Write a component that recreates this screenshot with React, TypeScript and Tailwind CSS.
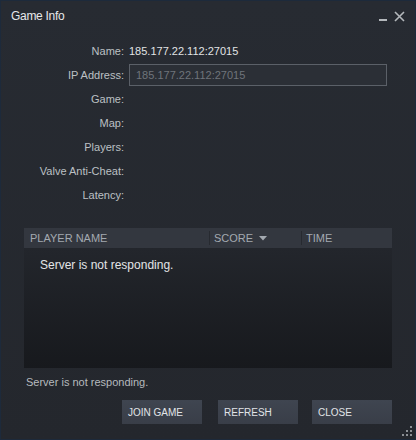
import React from "react";

const labels = ["Game:", "Map:", "Players:", "Valve Anti-Cheat:", "Latency:"];

function Row({ label, children }: { label: string; children?: React.ReactNode }) {
  return (
    <div className="flex h-[24px] items-center">
      <div className="w-[123px] shrink-0 text-right text-[11px] text-[#bcc0c4]">{label}</div>
      <div className="ml-[5px] flex items-center">{children}</div>
    </div>
  );
}

export default function App() {
  return (
    <div
      className="relative flex h-[440px] w-[416px] flex-col border border-[#1d2a3b] bg-gradient-to-b from-[#272b32] to-[#24272d] text-[#dfe1e3]"
      style={{ fontFamily: '"Liberation Sans", Arial, sans-serif' }}
    >
      {/* title bar */}
      <div className="flex h-[30px] shrink-0 items-center pl-[10px] pr-[10px]">
        <div className="text-[12px] tracking-[-0.3px] text-[#e6e8ea]">Game Info</div>
        <div className="ml-auto flex items-center gap-[6px]">
          <svg width="9" height="12" viewBox="0 0 9 12">
            <rect x="0" y="9" width="8" height="2" fill="#b4b8bc" />
          </svg>
          <svg width="11" height="11" viewBox="0 0 11 11">
            <path d="M1 1 L10 10 M10 1 L1 10" stroke="#b4b8bc" strokeWidth="1.6" />
          </svg>
        </div>
      </div>

      {/* info rows */}
      <div className="pt-[8px]">
        <Row label="Name:">
          <span className="text-[11px] text-[#e1e3e5]">185.177.22.112:27015</span>
        </Row>
        <Row label="IP Address:">
          <div className="flex h-[22px] w-[258px] items-center border border-[#5b6068] bg-[#2b2f36] pl-[6px] text-[11px] text-[#6f747b]">
            185.177.22.112:27015
          </div>
        </Row>
        {labels.map((l) => (
          <Row key={l} label={l} />
        ))}
      </div>

      {/* table */}
      <div className="mx-[23px] mt-[21px] flex h-[140px] flex-col">
        <div className="flex h-[20px] shrink-0 items-center bg-[#33373f] text-[11px] text-[#a3a9b0]">
          <div className="w-[185px] pl-[6px]">PLAYER NAME</div>
          <div className="h-[14px] w-px bg-[#272a30]" />
          <div className="flex w-[91px] items-center pl-[4px]">
            SCORE
            <svg className="ml-[6px]" width="8" height="5" viewBox="0 0 8 5">
              <path d="M0 0 L8 0 L4 4.5 Z" fill="#a3a9b0" />
            </svg>
          </div>
          <div className="h-[14px] w-px bg-[#272a30]" />
          <div className="pl-[4px]">TIME</div>
        </div>
        <div className="flex-1 bg-gradient-to-b from-[#23262c] to-[#17191d] pl-[16px] pt-[9px]">
          <div className="text-[12px] leading-[16px] text-[#e3e5e7]">Server is not responding.</div>
        </div>
      </div>

      {/* status */}
      <div className="mt-[6px] h-[16px] pl-[25px] text-[11px] leading-[16px] text-[#b6babe]">
        Server is not responding.
      </div>

      {/* buttons */}
      <div className="mt-[10px] flex pr-[23px]">
        <div className="ml-auto flex">
          <button className="flex h-[24px] w-[80px] items-center bg-gradient-to-b from-[#3f4550] to-[#393e48] pl-[6px] text-[10px] text-[#e1e4e7]">
            JOIN GAME
          </button>
          <button className="ml-[16px] flex h-[24px] w-[80px] items-center bg-gradient-to-b from-[#3f4550] to-[#393e48] pl-[6px] text-[10px] text-[#e1e4e7]">
            REFRESH
          </button>
          <button className="ml-[14px] flex h-[24px] w-[80px] items-center bg-gradient-to-b from-[#3f4550] to-[#393e48] pl-[6px] text-[10px] text-[#e1e4e7]">
            CLOSE
          </button>
        </div>
      </div>

      {/* resize grip */}
      <svg className="absolute bottom-[3px] right-[3px]" width="10" height="10" viewBox="0 0 10 10">
        <rect x="8" y="0" width="2" height="2" fill="#8b8f94" />
        <rect x="4" y="4" width="2" height="2" fill="#8b8f94" />
        <rect x="8" y="4" width="2" height="2" fill="#8b8f94" />
        <rect x="0" y="8" width="2" height="2" fill="#8b8f94" />
        <rect x="4" y="8" width="2" height="2" fill="#8b8f94" />
        <rect x="8" y="8" width="2" height="2" fill="#8b8f94" />
      </svg>
    </div>
  );
}
